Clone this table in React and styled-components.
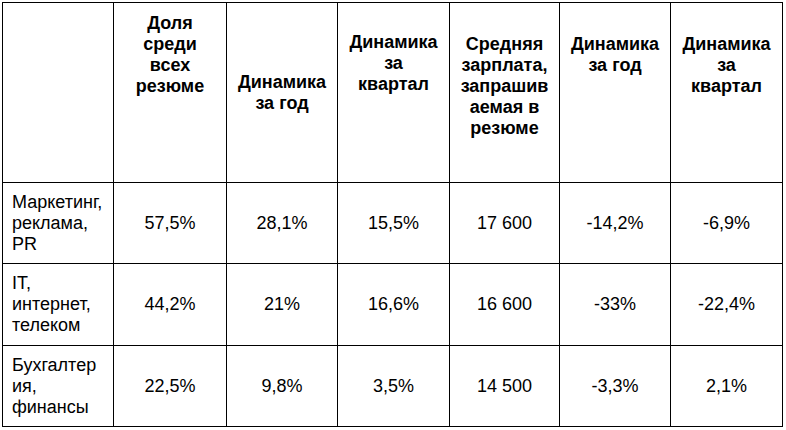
import React from 'react';
import styled, { createGlobalStyle } from 'styled-components';

const GlobalStyle = createGlobalStyle`
  html, body {
    margin: 0;
    padding: 0;
    background: #fff;
  }
  body {
    font-family: 'Liberation Sans', Arial, sans-serif;
    color: #000;
  }
`;

const Page = styled.div`
  padding: 2px 0 0 2px;
`;

const Table = styled.div`
  display: grid;
  grid-template-columns: 110px 112px 110px 111px 109px 110px 111px;
  grid-template-rows: 179px 80px 81px 80px;
  gap: 1px;
  width: max-content;
  padding: 1px;
  background: #000;
`;

const HeadCell = styled.div`
  display: flex;
  flex-direction: column;
  justify-content: ${p => (p.$middle ? 'center' : 'flex-start')};
  padding: ${p => (p.$middle ? 0 : p.$top)}px 6px 0;
  background: #fff;
  font-size: 18px;
  line-height: 21px;
  font-weight: 700;
  text-align: center;
`;

const Cell = styled.div`
  display: flex;
  flex-direction: column;
  justify-content: center;
  padding: 0 6px 0 ${p => (p.$label ? 9 : 6)}px;
  background: #fff;
  font-size: 18px;
  line-height: 21px;
  text-align: ${p => (p.$label ? 'left' : 'center')};
`;

const Line = styled.span`
  display: block;
  white-space: nowrap;
`;

const headers = [
  { lines: [''], top: 10 },
  { lines: ['Доля', 'среди', 'всех', 'резюме'], top: 10 },
  { lines: ['Динамика', 'за год'], middle: true },
  { lines: ['Динамика', 'за', 'квартал'], top: 29 },
  { lines: ['Средняя', 'зарплата,', 'запрашив', 'аемая в', 'резюме'], top: 31 },
  { lines: ['Динамика', 'за год'], top: 31 },
  { lines: ['Динамика', 'за', 'квартал'], top: 31 },
];

const rows = [
  {
    label: ['Маркетинг,', 'реклама,', 'PR'],
    values: ['57,5%', '28,1%', '15,5%', '17 600', '-14,2%', '-6,9%'],
  },
  {
    label: ['IT,', 'интернет,', 'телеком'],
    values: ['44,2%', '21%', '16,6%', '16 600', '-33%', '-22,4%'],
  },
  {
    label: ['Бухгалтер', 'ия,', 'финансы'],
    values: ['22,5%', '9,8%', '3,5%', '14 500', '-3,3%', '2,1%'],
  },
];

const App = () => (
  <React.Fragment>
    <GlobalStyle />
    <Page>
      <Table>
        {headers.map((h, i) => (
          <HeadCell key={i} $middle={h.middle} $top={h.top}>
            {h.lines.map((l, j) => (
              <Line key={j}>{l}</Line>
            ))}
          </HeadCell>
        ))}
        {rows.map((row, i) => (
          <React.Fragment key={i}>
            <Cell $label>
              {row.label.map((l, j) => (
                <Line key={j}>{l}</Line>
              ))}
            </Cell>
            {row.values.map((v, j) => (
              <Cell key={j}>{v}</Cell>
            ))}
          </React.Fragment>
        ))}
      </Table>
    </Page>
  </React.Fragment>
);

export default App;
